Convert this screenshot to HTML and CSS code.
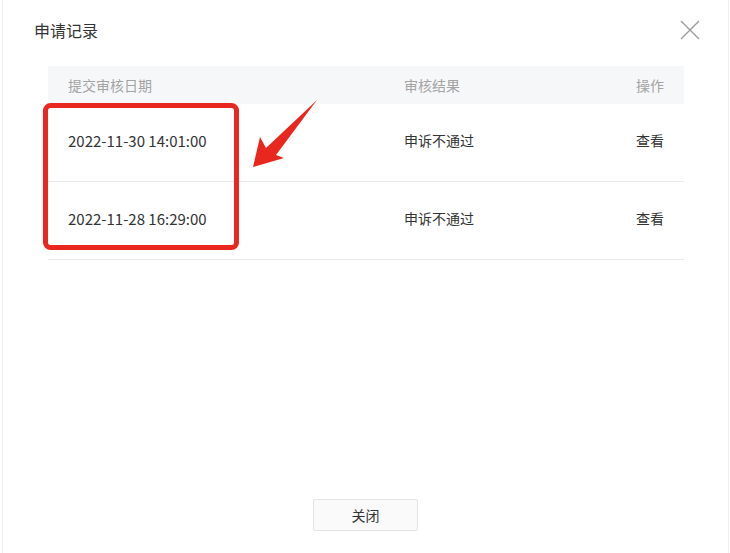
FILE: index.html
```html
<!DOCTYPE html>
<html lang="zh-CN">
<head>
<meta charset="utf-8">
<title>申请记录</title>
<link rel="stylesheet" href="styles.css">
</head>
<body>
<div class="modal">
  <div class="modal-header">
    <div class="modal-title">申请记录</div>
    <svg class="close-icon" width="20" height="20" viewBox="0 0 20 20"><path d="M1 1L19 19M19 1L1 19" stroke="#9a9a9a" stroke-width="1.3" fill="none"/></svg>
  </div>
  <div class="table">
    <div class="row head">
      <div class="cell c1">提交审核日期</div>
      <div class="cell c2">审核结果</div>
      <div class="cell c3">操作</div>
    </div>
    <div class="row">
      <div class="cell c1 date">2022-11-30 14:01:00</div>
      <div class="cell c2">申诉不通过</div>
      <div class="cell c3">查看</div>
    </div>
    <div class="row">
      <div class="cell c1 date">2022-11-28 16:29:00</div>
      <div class="cell c2">申诉不通过</div>
      <div class="cell c3">查看</div>
    </div>
  </div>
  <div class="modal-footer">
    <button class="btn">关闭</button>
  </div>
</div>
<svg class="annotation" width="730" height="553" viewBox="0 0 730 553">
  <rect x="45.5" y="105.5" width="191" height="142" rx="5" ry="5" fill="none" stroke="#e8281f" stroke-width="5"/>
  <polygon points="317,100 266,148 260,137 253,167 284,158 276,155" fill="#e8281f"/>
</svg>
</body>
</html>
```

FILE: styles.css
```css
html, body {
  margin: 0;
  padding: 0;
  background: #ffffff;
}
body {
  font-family: "Noto Sans CJK SC", "Microsoft YaHei", sans-serif;
  color: #333333;
  width: 730px;
  height: 553px;
  overflow: hidden;
  position: relative;
}
.modal {
  box-sizing: border-box;
  margin-left: 2px;
  width: 727px;
  height: 553px;
  border-left: 1px solid #eeeeee;
  border-right: 1px solid #eeeeee;
  display: flex;
  flex-direction: column;
}
.modal-header {
  display: flex;
  justify-content: space-between;
  align-items: flex-start;
  padding: 19px 28px 0 31px;
  height: 66px;
  box-sizing: border-box;
  flex-shrink: 0;
}
.modal-title {
  font-size: 16px;
  line-height: 22px;
  color: #333333;
}
.close-icon {
  margin-top: 1px;
}
.table {
  margin-left: 45px;
  width: 636px;
}
.row {
  display: flex;
  align-items: center;
  box-sizing: border-box;
  height: 78px;
  padding-bottom: 5px;
  border-bottom: 1px solid #e9e9e9;
  font-size: 14px;
}
.row.head {
  height: 38px;
  padding-bottom: 0;
  background: #f6f7f9;
  border-bottom: none;
  color: #a3a3a3;
}
.cell.c1 {
  width: 336px;
  padding-left: 20px;
}
.cell.c2 {
  flex: 1;
}
.cell.c3 {
  padding-right: 20px;
  text-align: right;
}
.date {
  font-size: 15px;
  color: #333333;
}
.modal-footer {
  margin-top: auto;
  display: flex;
  justify-content: center;
  padding-bottom: 22px;
}
.btn {
  width: 105px;
  height: 32px;
  border: 1px solid #e4e4e4;
  background: #fafafa;
  font-family: "Noto Sans CJK SC", sans-serif;
  font-size: 14px;
  color: #333333;
  border-radius: 2px;
  padding: 0;
}
.annotation {
  position: absolute;
  left: 0;
  top: 0;
  pointer-events: none;
}
```
